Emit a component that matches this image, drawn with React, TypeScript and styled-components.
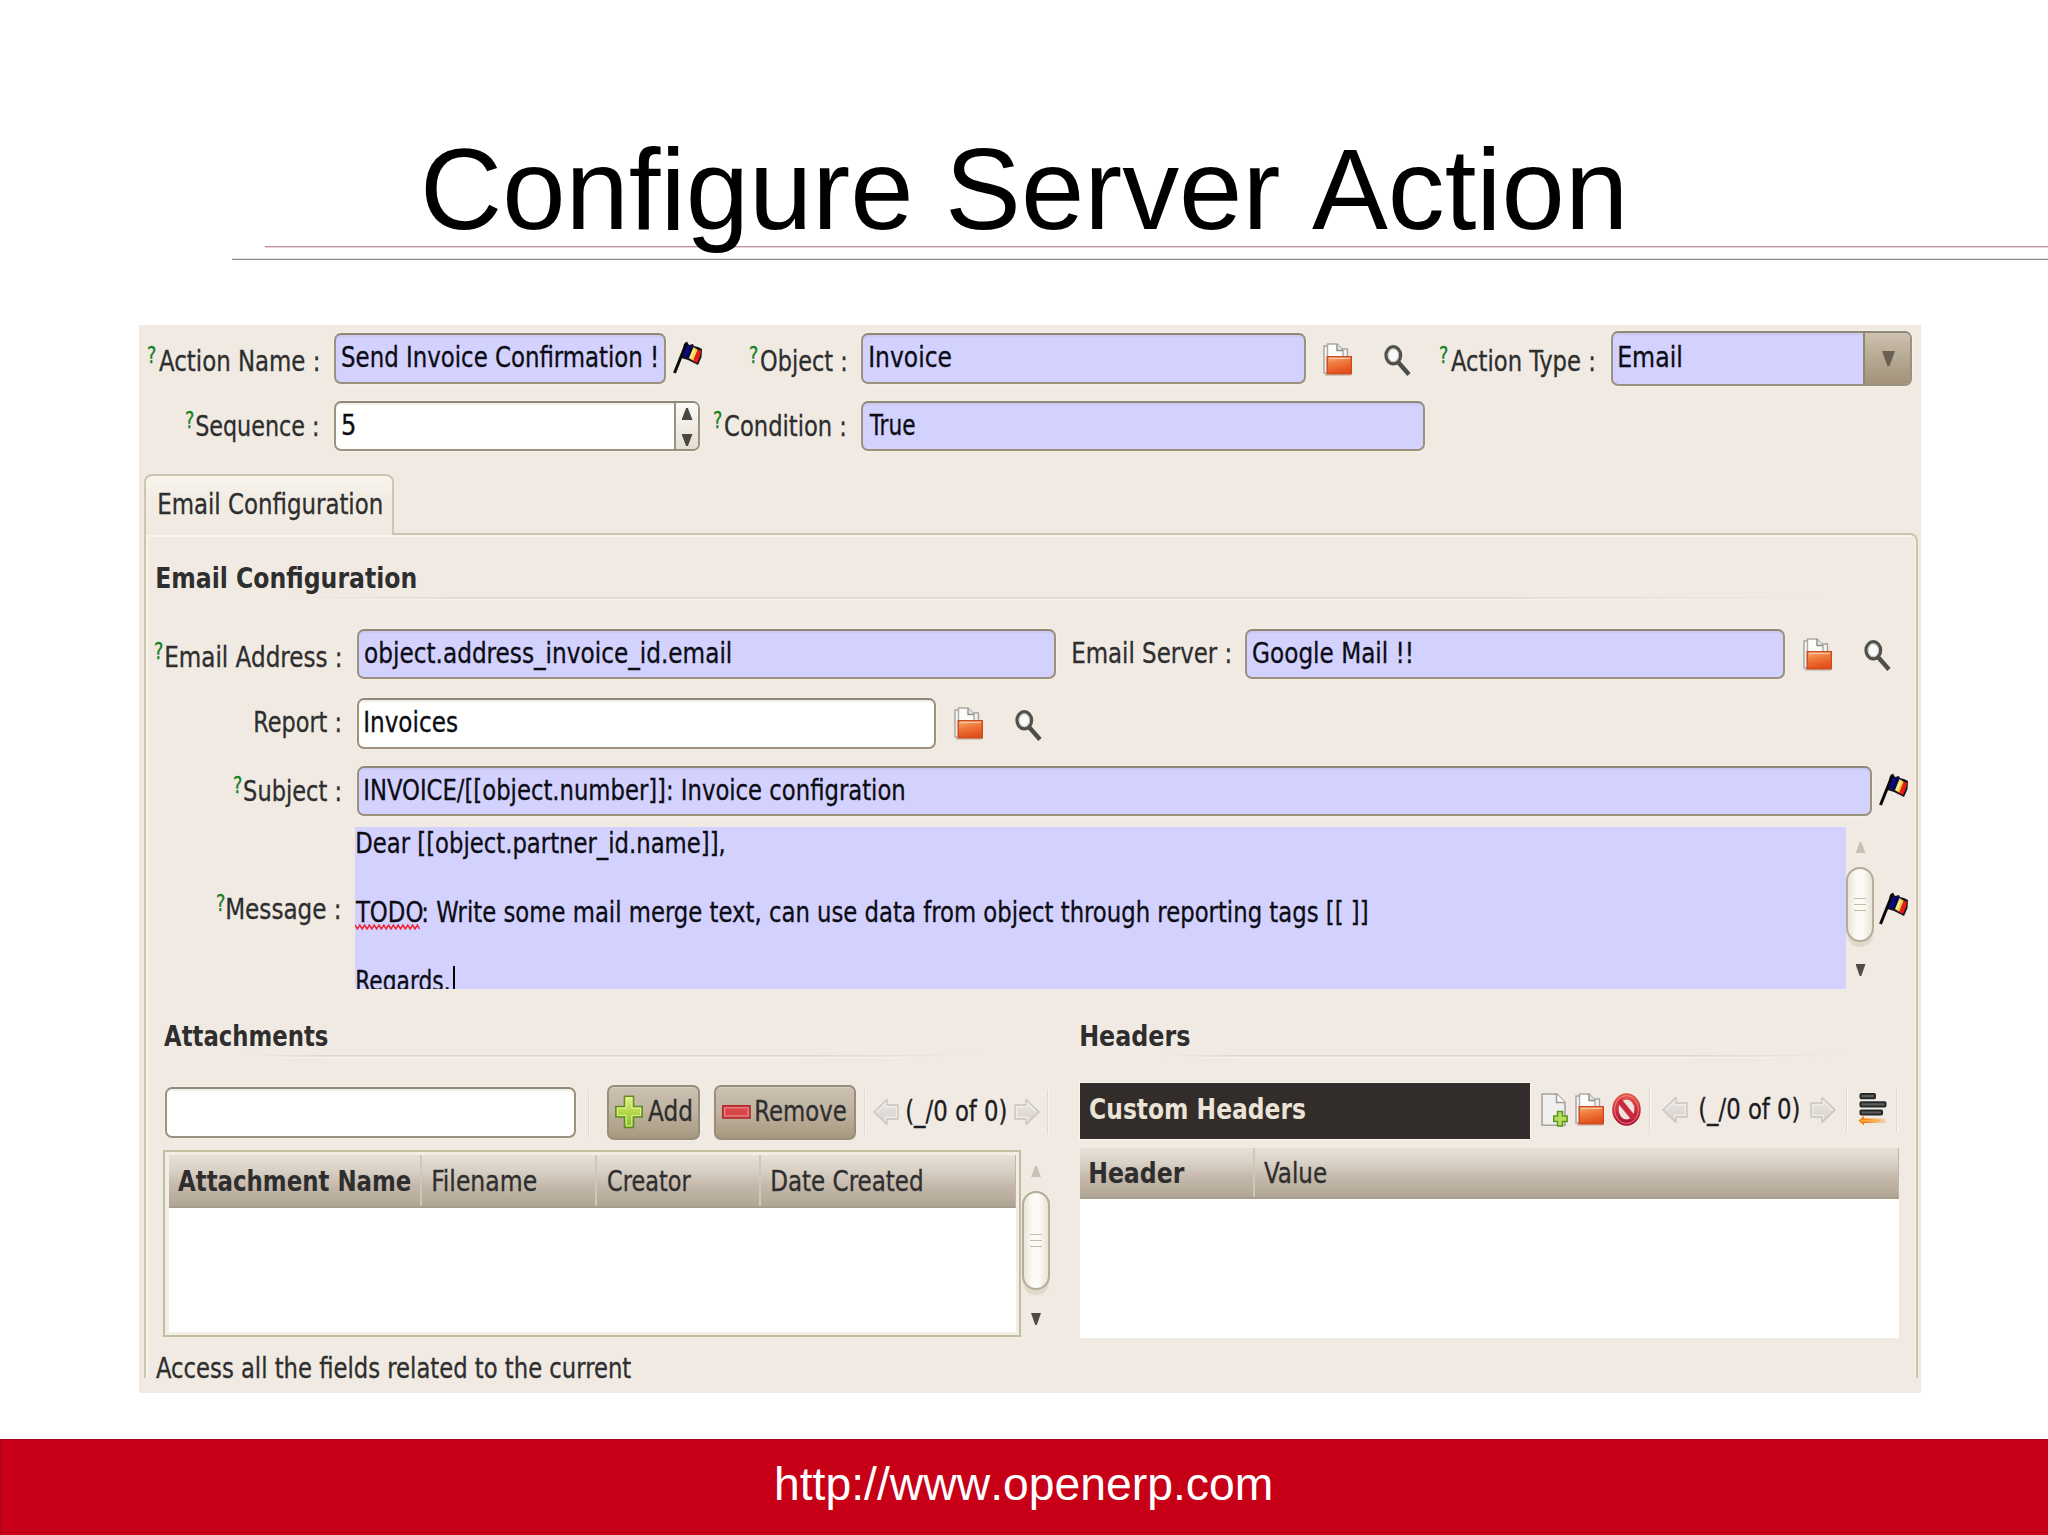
import React, { useLayoutEffect, useRef, useState } from 'react';
import styled, { createGlobalStyle, css } from 'styled-components';

const GlobalStyle = createGlobalStyle`
  * { box-sizing: border-box; }
  body { margin: 0; background: #fff; }
`;

const uiFont = `'DejaVu Sans Condensed', 'DejaVu Sans', sans-serif`;

interface Offset {
  $l?: number;
  $t?: number;
}
const offset = css<Offset>`
  margin-left: ${(p) => p.$l ?? 0}px;
  margin-top: ${(p) => p.$t ?? 0}px;
  flex: none;
`;

/* ---------- text fitted to an exact drawn width ---------- */

const FitBox = styled.span<Offset & { $w: number; $size: number; $line: number; $bold?: boolean; $color?: string; $font?: string }>`
  ${offset}
  display: block;
  width: ${(p) => p.$w}px;
  height: ${(p) => p.$line}px;
  font-family: ${(p) => p.$font ?? uiFont};
  font-stretch: ${(p) => (p.$font ? 'normal' : 'semi-condensed')};
  font-kerning: ${(p) => (p.$font ? 'none' : 'auto')};
  font-size: ${(p) => p.$size}px;
  line-height: ${(p) => p.$line}px;
  font-weight: ${(p) => (p.$bold ? 700 : 400)};
  color: ${(p) => p.$color ?? '#2e2e2e'};
  -webkit-text-stroke: ${(p) => (p.$font || p.$bold ? 0 : 0.3)}px ${(p) => p.$color ?? '#2e2e2e'};
  white-space: pre;
`;
const FitInner = styled.span`
  display: inline-block;
  transform-origin: 0 0;
  vertical-align: top;
`;

interface TextProps {
  w: number;
  children: string;
  l?: number;
  t?: number;
  size?: number;
  line?: number;
  bold?: boolean;
  color?: string;
  font?: string;
}

function Text({ w, children, l, t, size = 28.4, line = 31.4, bold, color, font }: TextProps) {
  const ref = useRef<HTMLSpanElement>(null);
  const [fit, setFit] = useState({ scale: 1, shift: 0 });
  useLayoutEffect(() => {
    const el = ref.current;
    const ctx = document.createElement('canvas').getContext('2d');
    if (!el || !ctx) return;
    const cs = getComputedStyle(el);
    ctx.font = `${cs.fontWeight} ${cs.fontSize} ${cs.fontFamily}`;
    const m = ctx.measureText(children);
    const ratio = el.offsetWidth / m.width;
    const ink = (m.actualBoundingBoxLeft + m.actualBoundingBoxRight) * ratio;
    const scale = (w - 2) / ink;
    setFit({ scale, shift: m.actualBoundingBoxLeft * ratio * scale + 1 });
  }, [children, w]);
  return (
    <FitBox $w={w} $l={l} $t={t} $size={size} $line={line} $bold={bold} $color={color} $font={font}>
      <FitInner ref={ref} style={{ transform: `translateX(${fit.shift}px) scaleX(${fit.scale})` }}>
        {children}
      </FitInner>
    </FitBox>
  );
}

/* ---------- slide ---------- */

const Slide = styled.main`
  width: 2048px;
  height: 1535px;
  overflow: hidden;
  display: flex;
  flex-direction: column;
  background: #fff;
`;
const SlideHeader = styled.header`
  height: 325px;
  flex: none;
  padding-top: 128px;
`;
const TitleWrap = styled.h1`
  margin: 0 0 0 424px;
  height: 118px;
  font-weight: 400;
  position: relative;
  z-index: 1;
`;
const Rule = styled.div<Offset & { $a: string; $b: string }>`
  ${offset}
  height: 2px;
  background: linear-gradient(${(p) => p.$a} 50%, ${(p) => p.$b} 50%);
`;
const SlideFooter = styled.footer`
  margin-top: 46px;
  flex: 1;
  background: #c80017;
  border: 1px solid #a8061c;
  border-width: 1px 0 0 1px;
  padding-left: 775px;
`;

/* ---------- window panel ---------- */

const Panel = styled.section`
  margin-left: 139px;
  width: 1782px;
  height: 1068px;
  flex: none;
  background: #f0eae3;
  display: flex;
  flex-direction: column;
`;
const Row = styled.div<{ $h: number }>`
  display: flex;
  align-items: flex-start;
  flex: none;
  height: ${(p) => p.$h}px;
`;
const LabelBox = styled.div<Offset & { $w: number }>`
  ${offset}
  display: flex;
  justify-content: flex-end;
  width: ${(p) => p.$w}px;
  padding-right: 1.5px;
`;
const Entry = styled.div<Offset & { $w: number; $h?: number; $plain?: boolean }>`
  ${offset}
  display: flex;
  width: ${(p) => p.$w}px;
  height: ${(p) => p.$h ?? 50}px;
  padding: 6.5px 0 0 5px;
  border: 2px solid #9c917f;
  border-top-color: #8f8778;
  border-radius: 7px;
  background: ${(p) => (p.$plain ? '#fffffe' : '#d3d1fe')};
  box-shadow: inset 0 2px 1px ${(p) => (p.$plain ? '#f1efea' : '#c9c8ee')}, 0 0 0 1px #f5f0e6;
`;
const SpinEntry = styled(Entry)`
  padding-right: 0;
  justify-content: space-between;
  overflow: hidden;
`;
const SpinButtons = styled.div`
  width: 24px;
  height: 46px;
  margin-top: -6.5px;
  border-left: 2px solid #9c917f;
  background: linear-gradient(#fbfaf7, #e4dfd3);
  display: flex;
  flex-direction: column;
  align-items: center;
  justify-content: space-between;
  padding: 5px 0 3px;
`;
const Combo = styled(Entry)`
  height: 55px;
  padding-top: 9px;
  overflow: hidden;
  justify-content: space-between;
`;
const ComboButton = styled.div`
  width: 47px;
  height: 51px;
  margin-top: -9px;
  border-left: 2px solid #91866f;
  background: linear-gradient(#cdc2b0, #b8ab96 45%, #a19277);
  display: flex;
  align-items: center;
  justify-content: center;
`;
const Triangle = styled.i<Offset & { $dir: 'up' | 'down'; $w: number; $h: number; $c: string }>`
  ${offset}
  display: block;
  width: ${(p) => p.$w}px;
  height: ${(p) => p.$h}px;
  background: ${(p) => p.$c};
  clip-path: ${(p) =>
    p.$dir === 'up' ? 'polygon(42% 0, 58% 0, 100% 100%, 0 100%)' : 'polygon(0 0, 100% 0, 58% 100%, 42% 100%)'};
`;
const Tab = styled.div`
  margin: 0 0 -2px 5px;
  width: 250px;
  height: 61px;
  flex: none;
  padding: 13px 0 0 11.5px;
  border: 2px solid #cdc7b1;
  border-bottom: none;
  border-radius: 8px 8px 0 0;
  background: linear-gradient(#f9f6ee, #f2ede4 35%, #f0eae3);
  position: relative;
  z-index: 1;
`;
const Body = styled.div`
  margin-left: 5px;
  width: 1774px;
  height: 845px;
  flex: none;
  border: 2px solid #cbc5ad;
  border-bottom: none;
  border-top-right-radius: 8px;
  box-shadow: inset 2px 2px 0 #f8f4ea, inset -1px 0 0 #f8f4ea;
`;
const FadeRule = styled.div<Offset & { $w: number }>`
  ${offset}
  width: ${(p) => p.$w}px;
  height: 3px;
  background: linear-gradient(90deg, transparent, #dcd6cc 12%, #dcd6cc 75%, transparent) 0 0 / 100% 1.5px no-repeat,
    linear-gradient(90deg, transparent, #f8f4ee 12%, #f8f4ee 75%, transparent) 0 1.5px / 100% 1.5px no-repeat;
`;
const TextArea = styled.div`
  width: 1491px;
  height: 162px;
  flex: none;
  margin-left: 13px;
  background: #d3d1fe;
  overflow: hidden;
  padding: 0.5px 0 0 1px;
`;
const Line = styled.div`
  display: flex;
  height: 34.5px;
`;
const Misspelt = styled.div`
  display: flex;
  flex-direction: column;
  width: 67px;
  margin-left: -1px;
  height: 34px;
  svg { flex: none; margin-top: -4px; }
`;
const Caret = styled.i`
  width: 2px;
  height: 30px;
  margin-left: 3px;
  background: #000;
`;
const ScrollColumn = styled.div<{ $l: number; $t: number }>`
  margin: ${(p) => p.$t}px 0 0 ${(p) => p.$l}px;
  width: 28px;
  flex: none;
  display: flex;
  flex-direction: column;
  align-items: center;
`;
const Thumb = styled.div<{ $h: number; $t: number; $b: number }>`
  width: 28px;
  height: ${(p) => p.$h}px;
  margin: ${(p) => p.$t}px 0 ${(p) => p.$b}px;
  border: 2px solid #b5ad98;
  border-radius: 14px;
  background: linear-gradient(90deg, #e9e5d8, #fbfaf5 35%, #fbfaf5 60%, #e8e4d6);
  box-shadow: 0 6px 1px -1px #dfd9cb;
  display: flex;
  flex-direction: column;
  align-items: center;
  justify-content: center;
  gap: 4.5px;
`;
const Grip = styled.i`
  width: 12px;
  height: 1.5px;
  background: #c3bca9;
`;
const VSep = styled.i<Offset & { $h: number }>`
  ${offset}
  width: 2px;
  height: ${(p) => p.$h}px;
  background: linear-gradient(90deg, #dfd9cf 50%, #f9f6f0 50%);
`;
const Columns = styled.div`
  display: flex;
  height: 356px;
`;
const LeftColumn = styled.div`
  width: 933.5px;
  flex: none;
  padding-left: 17px;
`;
const RightColumn = styled.div`
  flex: 1;
`;
const ToolButton = styled.div<Offset & { $w: number }>`
  ${offset}
  display: flex;
  width: ${(p) => p.$w}px;
  height: 55px;
  border: 2px solid #998e7c;
  border-radius: 7px;
  background: linear-gradient(#cbc1b2, #bfb29f 50%, #a6987f);
  box-shadow: inset 0 1px 0 #d8cfc2;
`;
const AttachFrame = styled.div`
  width: 858px;
  height: 187px;
  flex: none;
  border: 2px solid #c3bd9f;
  padding: 3px 3px 3px 4px;
  background: #f3eee5;
`;
const Grid = styled.div<{ $h: number; $w?: number }>`
  height: ${(p) => p.$h}px;
  width: ${(p) => (p.$w ? `${p.$w}px` : '100%')};
  background: #fffffd;
`;
const GridHead = styled.div<{ $h: number }>`
  display: flex;
  height: ${(p) => p.$h}px;
  background: linear-gradient(#e7e1d7, #d9d1c6 30%, #c5b9ab 60%, #b1a595);
  border-bottom: 2px solid #a89c8c;
  border-right: 1px solid #bfb6a8;
`;
const HeadCell = styled.div<{ $w?: number; $p: number; $t: number }>`
  width: ${(p) => (p.$w ? `${p.$w}px` : 'auto')};
  flex: ${(p) => (p.$w ? 'none' : '1')};
  padding: ${(p) => p.$t}px 0 0 ${(p) => p.$p}px;
  border-right: ${(p) => (p.$w ? '2px solid #d0c7bb' : 'none')};
`;
const DarkTitle = styled.div`
  width: 450px;
  height: 56px;
  flex: none;
  margin-top: 25px;
  padding: 11px 0 0 10px;
  background: #322d2b;
  box-shadow: 0 0 0 1px #f8f5ef;
`;
const Svg = styled.svg<Offset>`
  ${offset}
  display: block;
`;

/* ---------- icons ---------- */

type IconProps = { l?: number; t?: number };

const FlagIcon = ({ l, t }: IconProps) => (
  <Svg $l={l} $t={t} width="29" height="33" viewBox="0 0 29 33">
    <path d="M11 3 L14 0.5 L16 4 L20 3 L21 5 L25 6 L29 8 L28.5 16 L25 24 L20 21.5 L15 19 L10 17.5 L8 17 Z" fill="#15131c" />
    <path d="M13 5 L20 4.5 L16 17 L9.5 15 Z" fill="#0d0a86" />
    <path d="M17 6 L19.5 5 L16 16 L13 16 Z" fill="#06054e" />
    <path d="M20.5 6 L25 9 L20.5 20 L16 17 Z" fill="#f4d443" />
    <path d="M20.5 8 L22 9 L18 18 L16.5 17 Z" fill="#f7efa8" />
    <path d="M24.5 9 L28 9.5 L27 15 L24 22 L20 20 Z" fill="#e81d1a" />
    <path d="M13.5 2 L1.5 32" stroke="#080808" strokeWidth="3" fill="none" />
  </Svg>
);

const Pages = () => (
  <>
    <path d="M1 3 H8 V30 H1 Z" fill="#f6f5f2" stroke="#a5a4a0" strokeWidth="1.4" />
    <path d="M16 6 H24.5 V16 H16 Z" fill="#f2f1ee" stroke="#a5a4a0" strokeWidth="1.4" />
    <path d="M4.5 1 H14 L20 7 V29 H4.5 Z" fill="#fcfcfa" stroke="#aaa9a5" strokeWidth="1.4" />
    <path d="M14 1 V7.5 H20" fill="#e6e5e2" stroke="#8f8e8b" strokeWidth="1.4" />
  </>
);

const FolderIcon = ({ l, t }: IconProps) => (
  <Svg $l={l} $t={t} width="30" height="34" viewBox="0 0 30 34">
    <defs>
      <linearGradient id="folder" x1="0" y1="0" x2="0.3" y2="1">
        <stop offset="0" stopColor="#f3b07c" />
        <stop offset="0.45" stopColor="#ee7a3c" />
        <stop offset="1" stopColor="#e2501c" />
      </linearGradient>
    </defs>
    <path d="M2 32 H28" stroke="#cfc8bf" strokeWidth="2" />
    <Pages />
    <path d="M4.2 13.7 H28.3 V30.8 H4.2 Z" fill="url(#folder)" stroke="#cf4a20" strokeWidth="1.4" />
    <path d="M6 15.3 H27" stroke="#f8c9a2" strokeWidth="1.3" />
  </Svg>
);

const SearchIcon = ({ l, t }: IconProps) => (
  <Svg $l={l} $t={t} width="28" height="32" viewBox="0 0 28 32">
    <path d="M14 17 L25 29.5" stroke="#4d4d4b" strokeWidth="4.4" />
    <ellipse cx="9.3" cy="10.3" rx="7.3" ry="8.6" fill="#f5f3ee" stroke="#50504d" strokeWidth="3.3" />
    <ellipse cx="9.3" cy="10.3" rx="5.2" ry="6.4" fill="#faf9f6" stroke="#b9b7b0" strokeWidth="0.9" />
  </Svg>
);

const PlusIcon = ({ l, t }: IconProps) => (
  <Svg $l={l} $t={t} width="28" height="34" viewBox="0 0 28 34">
    <defs>
      <linearGradient id="plus" x1="0" y1="0" x2="0" y2="1">
        <stop offset="0" stopColor="#e6f08a" />
        <stop offset="0.5" stopColor="#b4d84a" />
        <stop offset="1" stopColor="#86bb28" />
      </linearGradient>
    </defs>
    <path d="M9.5 1.2 H18.5 V11.5 H27.2 V22 H18.5 V32.5 H9.5 V22 H0.8 V11.5 H9.5 Z" fill="url(#plus)" stroke="#5f8f1f" strokeWidth="1.6" />
    <path d="M11.2 3 H16.8 V13.2 H25.5 V20.3 H16.8 V30.8 H11.2 V20.3 H2.5 V13.2 H11.2 Z" fill="none" stroke="#dff09a" strokeWidth="1" />
  </Svg>
);

const MinusIcon = ({ l, t }: IconProps) => (
  <Svg $l={l} $t={t} width="29" height="14" viewBox="0 0 29 14">
    <rect x="0.8" y="0.8" width="27.2" height="12.2" fill="#d8474a" stroke="#b32a35" strokeWidth="1.6" />
    <rect x="2.6" y="2.8" width="23.6" height="8.2" fill="none" stroke="#ee8f8b" strokeWidth="1.1" />
  </Svg>
);

const ArrowIcon = ({ l, t, right }: IconProps & { right?: boolean }) => (
  <Svg $l={l} $t={t} width="26" height="28" viewBox="0 0 26 28">
    <defs>
      <linearGradient id="arrow" x1="0" y1="0" x2="0" y2="1">
        <stop offset="0" stopColor="#ebe6e2" />
        <stop offset="1" stopColor="#d6d1cc" />
      </linearGradient>
    </defs>
    <g transform={right ? 'translate(26 0) scale(-1 1)' : undefined}>
      <path d="M1 14 L14 1.5 V7 H25 V21 H14 V26.5 Z" fill="url(#arrow)" stroke="#c9c3bf" strokeWidth="1.3" strokeLinejoin="round" />
      <path d="M3.4 14 L12.6 5 V8.6 H23.4 V19.4 H12.6 V23" fill="none" stroke="#f1ede9" strokeWidth="1.1" />
    </g>
  </Svg>
);

const NewIcon = ({ l, t }: IconProps) => (
  <Svg $l={l} $t={t} width="27" height="34" viewBox="0 0 27 34">
    <path d="M1 1 H16 L24 9.5 V32.3 H1 Z" fill="#f0f1ef" stroke="#a3a3a0" strokeWidth="1.6" />
    <path d="M15.5 1 V9.5 H24" fill="#fff" stroke="#9b9b98" strokeWidth="1.5" />
    <path d="M16.5 18.5 H21.5 V23 H26.2 V28.5 H21.5 V33 H16.5 V28.5 H12.8 V23 H16.5 Z" fill="#b6dc5c" stroke="#5d961f" strokeWidth="1.5" />
  </Svg>
);

const StopIcon = ({ l, t }: IconProps) => (
  <Svg $l={l} $t={t} width="29" height="33" viewBox="0 0 29 33">
    <defs>
      <linearGradient id="stop" x1="0" y1="0" x2="0" y2="1">
        <stop offset="0" stopColor="#e2564a" />
        <stop offset="0.5" stopColor="#cf2f3d" />
        <stop offset="1" stopColor="#b01238" />
      </linearGradient>
    </defs>
    <ellipse cx="14.5" cy="16.5" rx="11.1" ry="13.1" fill="#f0e5de" stroke="url(#stop)" strokeWidth="6.4" />
    <path d="M7.2 7.5 L21.8 25.5" stroke="#c92b3d" strokeWidth="5.4" />
    <ellipse cx="14.5" cy="16.5" rx="12" ry="14" fill="none" stroke="#ea8d84" strokeWidth="0.9" />
  </Svg>
);

const ListIcon = ({ l, t }: IconProps) => (
  <Svg $l={l} $t={t} width="29" height="33" viewBox="0 0 29 33">
    <g fill="#5c5e5e" stroke="#262828" strokeWidth="2">
      <rect x="2.5" y="1" width="14.5" height="4.2" rx="0.8" />
      <rect x="2.5" y="9.2" width="25" height="4.4" rx="0.8" />
      <rect x="2.5" y="17.4" width="21.5" height="4.2" rx="0.8" />
    </g>
    <defs>
      <linearGradient id="orange" x1="0" y1="0" x2="1" y2="0">
        <stop offset="0.3" stopColor="#f08418" />
        <stop offset="1" stopColor="#f8c07c" stopOpacity="0.5" />
      </linearGradient>
    </defs>
    <path d="M0.5 27.7 L6 22.8 V25.5 H28 V30 H6 V32.6 Z" fill="url(#orange)" />
    <path d="M3 27.7 H22" stroke="#fbb24e" strokeWidth="1.2" />
  </Svg>
);

/* ---------- composed parts ---------- */

interface LabelProps {
  width: number;
  textWidth: number;
  l?: number;
  t: number;
  help?: boolean;
  children: string;
}
const Label = ({ width, textWidth, l, t, help, children }: LabelProps) => (
  <LabelBox $w={width} $l={l} $t={t}>
    {help && (
      <Text w={10} t={-6.5} size={22.5} line={30} color="#178022">
        ?
      </Text>
    )}
    <Text w={textWidth} l={0.5}>
      {children}
    </Text>
  </LabelBox>
);

const ScrollThumb = ({ h, t, b }: { h: number; t: number; b: number }) => (
  <Thumb $h={h} $t={t} $b={b}>
    <Grip />
    <Grip />
    <Grip />
  </Thumb>
);

export default function App() {
  return (
    <Slide>
      <GlobalStyle />
      <SlideHeader>
        <TitleWrap>
          <Text w={1199} size={114.5} line={122} font="'Liberation Sans', Arial, sans-serif" color="#000">
            Configure Server Action
          </Text>
        </TitleWrap>
        <Rule $l={265} $a="#b09ca5" $b="#f4cbd6" />
        <Rule $l={232} $t={10} $a="#e2e0e1" $b="#8c8a8c" />
      </SlideHeader>

      <Panel>
        <Row $h={69}>
          <Label width={181} textWidth={161} t={21} help>
            Action Name :
          </Label>
          <Entry $l={14} $t={8} $w={332} $h={51}>
            <Text w={316} color="#0c0c14">Send Invoice Confirmation !</Text>
          </Entry>
          <FlagIcon l={7} t={16} />
          <Label width={108} textWidth={86.5} l={37.5} t={21} help>
            Object :
          </Label>
          <Entry $l={13.5} $t={8} $w={445} $h={51}>
            <Text w={83} color="#0c0c14" l={1}>Invoice</Text>
          </Entry>
          <FolderIcon l={17} t={18} />
          <SearchIcon l={31} t={20} />
          <Label width={162} textWidth={144.5} l={21.5} t={21} help>
            Action Type :
          </Label>
          <Combo $l={15} $t={6} $w={301}>
            <Text w={64} color="#0c0c14">Email</Text>
            <ComboButton>
              <Triangle $dir="down" $w={13} $h={15} $c="#6a6052" $l={3} />
            </ComboButton>
          </Combo>
        </Row>
        <Row $h={80}>
          <Label width={181} textWidth={123.5} t={17} help>
            Sequence :
          </Label>
          <SpinEntry $l={14} $t={7} $w={366} $plain>
            <Text w={15} color="#0c0c14">5</Text>
            <SpinButtons>
              <Triangle $dir="up" $w={11} $h={12} $c="#4a4743" />
              <Triangle $dir="down" $w={11} $h={12} $c="#4a4743" />
            </SpinButtons>
          </SpinEntry>
          <Label width={147} textWidth={122} t={17} help>
            Condition :
          </Label>
          <Entry $l={14} $t={7} $w={564}>
            <Text w={48} color="#0c0c14">True</Text>
          </Entry>
        </Row>

        <Tab>
          <Text w={225}>Email Configuration</Text>
        </Tab>
        <Body>
          <Row $h={62}>
            <Text w={261} l={10} t={27.5} bold>
              Email Configuration
            </Text>
          </Row>
          <FadeRule $w={1540} $l={144} />
          <Row $h={88}>
            <Label width={196} textWidth={176} t={42} help>
              Email Address :
            </Label>
            <Entry $l={15} $t={29} $w={699}>
              <Text w={367} color="#0c0c14">object.address_invoice_id.email</Text>
            </Entry>
            <Text w={158.5} l={15.5} t={37.5}>
              Email Server :
            </Text>
            <Entry $l={15} $t={29} $w={540}>
              <Text w={160.5} color="#0c0c14">Google Mail !!</Text>
            </Entry>
            <FolderIcon l={18} t={38} />
            <SearchIcon l={31} t={40} />
          </Row>
          <Row $h={69}>
            <Label width={196} textWidth={86.5} t={19}>
              Report :
            </Label>
            <Entry $l={15} $t={10} $w={579} $h={51} $plain>
              <Text w={95} color="#0c0c14">Invoices</Text>
            </Entry>
            <FolderIcon l={18} t={19} />
            <SearchIcon l={31} t={22} />
          </Row>
          <Row $h={70}>
            <Label width={196} textWidth={97.5} t={19} help>
              Subject :
            </Label>
            <Entry $l={15} $t={9} $w={1515}>
              <Text w={542} color="#0c0c14">INVOICE/[[object.number]]: Invoice configration</Text>
            </Entry>
            <FlagIcon l={7} t={16} />
          </Row>
          <Row $h={162}>
            <Label width={196} textWidth={114.5} t={67} l={0} help>
              Message :
            </Label>
            <TextArea>
              <Line>
                <Text w={369} color="#0c0c14">{'Dear [[object.partner_id.name]],'}</Text>
              </Line>
              <Line />
              <Line>
                <Misspelt>
                  <Text w={69} l={-1} color="#0c0c14">TODO</Text>
                  <svg width="67" height="6" viewBox="0 0 67 6">
                    <path
                      d="M0 1 l2.4 4 l2.4 -4 l2.4 4 l2.4 -4 l2.4 4 l2.4 -4 l2.4 4 l2.4 -4 l2.4 4 l2.4 -4 l2.4 4 l2.4 -4 l2.4 4 l2.4 -4 l2.4 4 l2.4 -4 l2.4 4 l2.4 -4 l2.4 4 l2.4 -4 l2.4 4 l2.4 -4 l2.4 4 l2.4 -4 l2.4 4 l2.4 -4 l2.2 4"
                      fill="none"
                      stroke="#ee2a3a"
                      strokeWidth="1.5"
                    />
                  </svg>
                </Misspelt>
                <Text w={944.5} l={0.5} color="#0c0c14">
                  {': Write some mail merge text, can use data from object through reporting tags [[ ]]'}
                </Text>
              </Line>
              <Line />
              <Line>
                <Text w={94} color="#0c0c14">Regards,</Text>
                <Caret />
              </Line>
            </TextArea>
            <ScrollColumn $l={0} $t={15}>
              <Triangle $dir="up" $w={10} $h={11} $c="#c8c2b6" $l={1} />
              <ScrollThumb h={75} t={14} b={22} />
              <Triangle $dir="down" $w={10} $h={12} $c="#4f4c48" $l={1} />
            </ScrollColumn>
            <FlagIcon l={5} t={65} />
          </Row>

          <Columns>
            <LeftColumn>
              <Row $h={66}>
                <Text w={165} l={0} t={31.5} bold>
                  Attachments
                </Text>
              </Row>
              <FadeRule $w={740} $l={80} />
              <Row $h={92}>
                <Entry $l={2} $t={29} $w={411} $h={51} $plain />
                <VSep $l={12} $t={32} $h={48} />
                <ToolButton $l={16.5} $t={27} $w={93}>
                  <PlusIcon l={6} t={8} />
                  <Text w={44.5} l={4} t={9}>Add</Text>
                </ToolButton>
                <ToolButton $l={14} $t={27} $w={142}>
                  <MinusIcon l={6.5} t={18} />
                  <Text w={92.5} l={4} t={9}>Remove</Text>
                </ToolButton>
                <VSep $l={8} $t={32} $h={44} />
                <ArrowIcon l={7} t={40} />
                <Text w={101} l={7} t={38} color="#1c1c22">(_/0 of 0)</Text>
                <ArrowIcon l={7} t={40} right />
                <VSep $l={7} $t={32} $h={44} />
              </Row>
              <Row $h={188}>
                <AttachFrame>
                  <Grid $h={177}>
                    <GridHead $h={53}>
                      <HeadCell $w={253} $p={8} $t={10.5}>
                        <Text w={235.5} bold>Attachment Name</Text>
                      </HeadCell>
                      <HeadCell $w={175} $p={9.5} $t={10.5}>
                        <Text w={105.5}>Filename</Text>
                      </HeadCell>
                      <HeadCell $w={164} $p={9.5} $t={10.5}>
                        <Text w={85}>Creator</Text>
                      </HeadCell>
                      <HeadCell $p={9.5} $t={10.5}>
                        <Text w={151.5}>Date Created</Text>
                      </HeadCell>
                    </GridHead>
                  </Grid>
                </AttachFrame>
                <ScrollColumn $l={0.5} $t={16}>
                  <Triangle $dir="up" $w={10} $h={11} $c="#c8c2b6" $l={1} />
                  <ScrollThumb h={99} t={14} b={23} />
                  <Triangle $dir="down" $w={10} $h={12} $c="#4f4c48" $l={1} />
                </ScrollColumn>
              </Row>
            </LeftColumn>

            <RightColumn>
              <Row $h={66}>
                <Text w={110} l={0.5} t={31.5} bold>
                  Headers
                </Text>
              </Row>
              <FadeRule $w={690} $l={80} />
              <Row $h={90}>
                <DarkTitle>
                  <Text w={217} l={-0.5} bold color="#eae4d6">Custom Headers</Text>
                </DarkTitle>
                <NewIcon l={11} t={35} />
                <FolderIcon l={7} t={35} />
                <StopIcon l={7} t={35} />
                <VSep $l={8} $t={30} $h={44} />
                <ArrowIcon l={11} t={38} />
                <Text w={101} l={11} t={36} color="#1c1c22">(_/0 of 0)</Text>
                <ArrowIcon l={10} t={38} right />
                <VSep $l={10} $t={30} $h={44} />
                <ListIcon l={10.5} t={35} />
                <VSep $l={8.5} $t={30} $h={44} />
              </Row>
              <Grid $h={190} $w={819}>
                <GridHead $h={51}>
                  <HeadCell $w={175} $p={9.5} $t={9.5}>
                    <Text w={96.5} bold>Header</Text>
                  </HeadCell>
                  <HeadCell $p={8.5} $t={9.5}>
                    <Text w={64.5}>Value</Text>
                  </HeadCell>
                </GridHead>
              </Grid>
            </RightColumn>
          </Columns>
          <Row $h={33}>
            <Text w={477} l={8.5} t={8}>
              Access all the fields related to the current
            </Text>
          </Row>
        </Body>
      </Panel>

      <SlideFooter>
        <Text w={496} t={18} size={46} line={52} color="#fff" font="'Liberation Sans', Arial, sans-serif">
          http://www.openerp.com
        </Text>
      </SlideFooter>
    </Slide>
  );
}
